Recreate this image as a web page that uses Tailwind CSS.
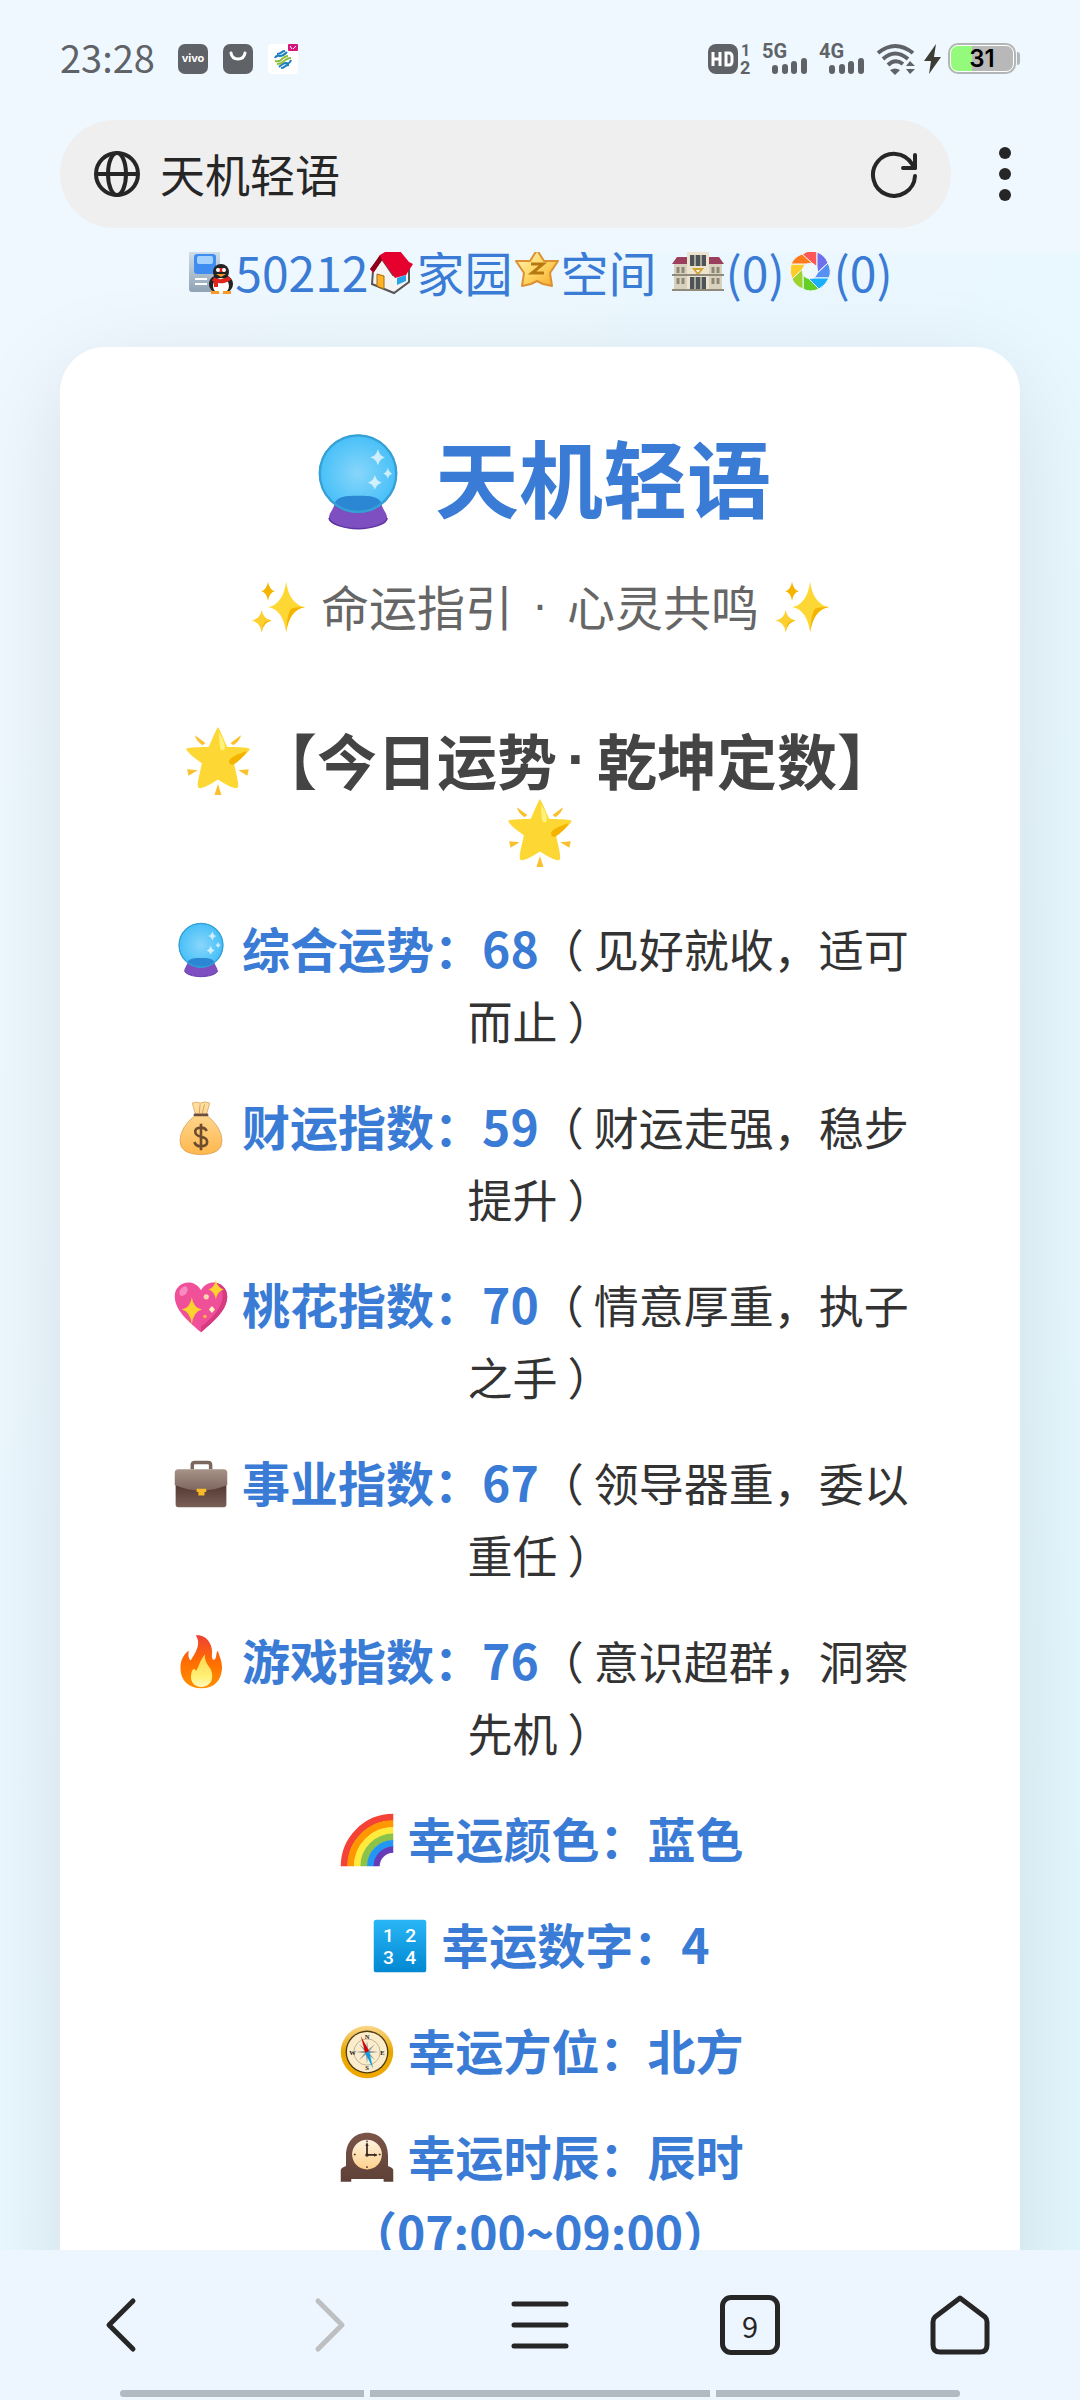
<!DOCTYPE html>
<html lang="zh-CN">
<head>
    <meta charset="UTF-8">
    <meta name="viewport" content="width=device-width, initial-scale=1.0">
    <title>天机轻语</title>
    <script src="https://cdn.jsdelivr.net/npm/@tailwindcss/browser@4"></script>
</head>
<body class="h-screen flex flex-col overflow-hidden bg-[#eff8ff] text-[#333] font-['Noto_Sans_CJK_SC',sans-serif]">

    <!-- Shared icon shapes -->
    <svg class="absolute w-0 h-0">
        <defs>
            <radialGradient id="ballFill"><stop offset="0" stop-color="#81d4fa"/><stop offset="1" stop-color="#3dbcf8"/></radialGradient>
            <linearGradient id="bagFill" x1="0" y1="0" x2="0" y2="1"><stop offset="0" stop-color="#ffe0a3"/><stop offset="1" stop-color="#ffb74d"/></linearGradient>
            <linearGradient id="caseFill" x1="0" y1="0" x2="0" y2="1"><stop offset="0" stop-color="#a89389"/><stop offset="1" stop-color="#7d665d"/></linearGradient>
            <linearGradient id="caseDark" x1="0" y1="0" x2="0" y2="1"><stop offset="0" stop-color="#4e342e"/><stop offset="1" stop-color="#795f56"/></linearGradient>
            <linearGradient id="fireFill" x1="0" y1="0" x2="0" y2="1"><stop offset="0" stop-color="#ef4035"/><stop offset=".5" stop-color="#ff6d00"/><stop offset="1" stop-color="#ff9100"/></linearGradient>
            <linearGradient id="flameFill" x1="0" y1="0" x2="0" y2="1"><stop offset="0" stop-color="#ffd54f"/><stop offset=".7" stop-color="#fff176"/><stop offset="1" stop-color="#fff9c4"/></linearGradient>
            <linearGradient id="numFill" x1="0" y1="0" x2="0" y2="1"><stop offset="0" stop-color="#29b6f6"/><stop offset="1" stop-color="#0288d1"/></linearGradient>
            <linearGradient id="goldFill" x1="0" y1="0" x2="0" y2="1"><stop offset="0" stop-color="#fcd68a"/><stop offset=".5" stop-color="#e8a800"/><stop offset="1" stop-color="#f0a800"/></linearGradient>
            <linearGradient id="faceFill" x1="0" y1="0" x2="0" y2="1"><stop offset="0" stop-color="#fff3e0"/><stop offset="1" stop-color="#ffd08a"/></linearGradient>
            <linearGradient id="woodFill" x1="0" y1="0" x2="0" y2="1"><stop offset="0" stop-color="#7b5548"/><stop offset="1" stop-color="#5d4037"/></linearGradient>
            <linearGradient id="penFill" x1="0" y1="0" x2="0" y2="1"><stop offset="0" stop-color="#d6e2ee"/><stop offset="1" stop-color="#8fa3b5"/></linearGradient>
            <linearGradient id="starFill" x1="0" y1="0" x2="1" y2="1"><stop offset="0" stop-color="#fff6c0"/><stop offset=".5" stop-color="#ffd867"/><stop offset="1" stop-color="#f7a829"/></linearGradient>
        </defs>
        <symbol id="crystal" viewBox="0 0 128 128">
            <path d="M34 88 C34 98 26 104 26 111 C26 119 46 125 64 125 C82 125 102 119 102 111 C102 104 94 98 94 88Z" fill="#7e4fc0"/>
            <path d="M26 111 C28 119 46 125 64 125 C82 125 102 119 102 111" fill="none" stroke="#5e35a1" stroke-width="2"/>
            <circle cx="64" cy="53" r="51" fill="url(#ballFill)" fill-opacity=".95"/>
            <path d="M33 94 C35 82 50 82 64 82 C78 82 93 82 95 94 A51 51 0 0 1 33 94Z" fill="#2b87d3"/>
            <circle cx="64" cy="53" r="50" fill="none" stroke="#35a0d4" stroke-width="3"/>
            <path d="M90 21 Q92 30 99 32 Q92 34 90 42 Q88 34 80 32 Q88 30 90 21Z M103 45 Q104 51 109 53 Q104 55 103 60 Q102 55 97 53 Q102 51 103 45Z M86 55 Q88 63 95 65 Q88 67 86 74 Q84 67 77 65 Q84 63 86 55Z" fill="#fff" fill-opacity=".7"/>
        </symbol>
        <symbol id="sparkles" viewBox="0 0 128 128">
            <path d="M82 8 Q89 58 124 64 Q89 70 82 120 Q75 70 42 64 Q75 58 82 8Z" fill="#fdd835"/>
            <path d="M124 64 Q89 70 82 120 Q84 78 93 68 Q103 63 124 64Z" fill="#f4b400"/>
            <path d="M42 8 Q45 26 57 29 Q45 32 42 50 Q39 32 27 29 Q39 26 42 8Z" fill="#f4b400"/>
            <path d="M28 70 Q31 90 50 94 Q31 98 28 120 Q25 98 6 94 Q25 90 28 70Z" fill="#fdd02f"/>
            <path d="M50 94 Q31 98 28 120 Q29 103 36 97 Q41 94 50 94Z" fill="#f4b400"/>
        </symbol>
        <symbol id="glowStar" viewBox="0 0 128 128">
            <g transform="translate(-18 0) scale(1.28 1)">
                <path d="M64 2 C68 10 72 24 77 38 C90 39 104 39 109 41 C111 45 98 58 87 68 C90 88 95 108 92 113 C88 117 74 106 64 98 C54 106 40 117 36 113 C33 108 38 88 41 68 C30 58 17 45 19 41 C24 39 38 39 51 38 C56 24 60 10 64 2Z" fill="#fdd835"/>
                <path d="M65 12 C70 20 74 32 74 40 C73 46 68 46 67 40Z" fill="#fff27a"/>
                <path d="M105 46 C98 48 82 56 80 63 C79 70 84 73 88 69 C92 65 102 56 105 46Z" fill="#f4b400"/>
                <path d="M31 17 L46 31 L42 35Q33 28 31 17Z M97 17 L82 31 L86 35Q95 28 97 17Z M20 79 L35 81 L22 91Z M108 79 L93 81 L106 91Z M64 106 L69 126 H59Z" fill="#fbc02d"/>
            </g>
        </symbol>
        <symbol id="moneyBag" viewBox="0 0 128 128">
            <path d="M44 7 Q54 3 62 7 Q74 2 84 7 L76 34 Q112 62 112 94 Q112 124 64 125 Q16 124 16 94 Q16 62 52 34Z" fill="url(#bagFill)" stroke="#d9a860" stroke-width="2"/>
            <path d="M62 10 L60 30 M72 10 L67 30" stroke="#c99a5b" stroke-width="2"/>
            <path d="M50 34 H78" stroke="#6d4c41" stroke-width="6" stroke-linecap="round"/>
            <path d="M77 71 Q74 63 64 63 Q50 63 51 74 Q52 81 64 84 Q79 87 78 97 Q77 106 64 106 Q52 106 49 96 M64 54 V115" fill="none" stroke="#6d4c2f" stroke-width="6"/>
        </symbol>
        <symbol id="heart" viewBox="0 0 128 128">
            <path d="M64 124 C42 104 4 76 4 42 C4 8 48 -2 64 28 C80 -2 124 8 124 42 C124 76 86 104 64 124Z" fill="#f0509a"/>
            <path d="M92 10 C126 20 117 62 88 90 Q75 103 64 111 V124 C86 104 124 76 124 42 C124 24 110 11 92 10Z" fill="#d63a80"/>
            <ellipse cx="24" cy="30" rx="8" ry="12" transform="rotate(35 24 30)" fill="#f78bc0"/>
            <path d="M43 44 Q47 69 66 72 Q47 76 43 106 Q39 76 20 72 Q39 69 43 44Z M98 4 Q101 23 116 26 Q101 30 98 49 Q95 30 81 26 Q95 23 98 4Z" fill="#fdd22f"/>
            <circle cx="76" cy="43" r="6" fill="#ffd6b0"/>
            <path d="M89 64 L96 72 L89 80 L82 72Z" fill="#fff2c0"/>
            <circle cx="73" cy="88" r="4" fill="#ffb13d"/>
        </symbol>
        <symbol id="briefcase" viewBox="0 0 128 128">
            <path d="M44 30 V21 Q44 15 50 15 H80 Q86 15 86 21 V30" fill="none" stroke="#7d665d" stroke-width="8"/>
            <rect x="6" y="60" width="116" height="57" rx="6" fill="url(#caseDark)"/>
            <path d="M4 38 Q4 30 12 30 H116 Q124 30 124 38 V66 Q94 79 64 79 Q34 79 4 66Z" fill="url(#caseFill)"/>
            <path d="M54 75 H76 V82 H72 V90 H58 V82 H54Z" fill="#fbb829"/>
        </symbol>
        <symbol id="fire" viewBox="0 0 128 128">
            <path d="M52 3 C76 0 92 24 89 46 C88 58 93 62 97 56 C100 50 98 42 103 38 C104 48 113 60 112 80 C110 108 92 124 66 124 C36 124 17 106 17 78 C17 56 27 44 36 38 C34 48 36 58 41 60 C50 44 66 24 52 3Z" fill="url(#fireFill)"/>
            <path d="M73 46 C72 62 78 68 86 80 C96 104 84 120 66 121 C46 120 38 106 42 90 C44 78 50 78 52 84 C56 84 60 62 73 46Z" fill="url(#flameFill)"/>
        </symbol>
        <symbol id="rainbow" viewBox="0 0 128 128">
            <g fill="none" stroke-width="16">
                <path d="M12 124 A112 112 0 0 1 124 12" stroke="#f44336"/>
                <path d="M27 124 A97 97 0 0 1 124 27" stroke="#ff9800"/>
                <path d="M42 124 A82 82 0 0 1 124 42" stroke="#ffeb3b"/>
                <path d="M57 124 A67 67 0 0 1 124 57" stroke="#8bc34a"/>
                <path d="M72 124 A52 52 0 0 1 124 72" stroke="#2196f3"/>
                <path d="M86 124 A38 38 0 0 1 124 86" stroke="#673ab7" stroke-width="14"/>
            </g>
        </symbol>
        <symbol id="clock" viewBox="0 0 128 128">
            <path d="M16 82 V58 C16 26 36 6 64 6 C92 6 112 26 112 58 V82 Q124 86 124 92 V118 H102 V112 H28 V118 H4 V92 Q4 86 16 82Z" fill="url(#woodFill)"/>
            <circle cx="64" cy="56" r="34" fill="url(#faceFill)"/>
            <path d="M64 31 V57 H86" fill="none" stroke="#3b2a24" stroke-width="4"/>
            <path d="M60 36 L64 29 L68 36Z M80 53 L88 57 L80 61Z" fill="#3b2a24"/>
            <circle cx="64" cy="57" r="4" fill="#3b2a24"/>
            <path d="M64 24 V28 M64 83 V87 M34 56 H38 M91 56 H95" stroke="#3b2a24" stroke-width="3"/>
        </symbol>
    </svg>

    <!-- Status bar -->
    <div class="flex items-center justify-between px-[60px] pt-[37px] h-[80px] shrink-0 text-[#5f6367]">
        <div class="flex items-center gap-[15px]">
            <span class="text-[38px] leading-[40px] mr-2 pb-1">23:28</span>
            <svg class="w-[30px] h-[30px]" viewBox="0 0 30 30">
                <rect width="30" height="30" rx="7" fill="#5f6367"/>
                <text x="15" y="18" text-anchor="middle" font-family="Inter, sans-serif" font-weight="700" font-size="11" fill="#fff">vivo</text>
            </svg>
            <svg class="w-[30px] h-[30px]" viewBox="0 0 30 30">
                <rect width="30" height="30" rx="7" fill="#5f6367"/>
                <path d="M8 9 Q9 15 15 15 Q21 15 22 9" fill="none" stroke="#fff" stroke-width="3" stroke-linecap="round"/>
            </svg>
            <svg class="w-[30px] h-[30px]" viewBox="0 0 30 30">
                <rect width="30" height="30" rx="4" fill="#fff"/>
                <rect x="20" width="10" height="7" rx="1" fill="#d6147b"/>
                <path d="M22 2 L24 5 M25 5 L28 2" stroke="#fff" stroke-width="1"/>
                <g fill="none" stroke="#1d7fc1" stroke-width="2">
                    <path d="M7 14 Q8 11 12 12 Q15 12 19 8 M9 10 Q12 10 14 8 Q15 7 17 7 M23 16 Q22 20 18 19 Q15 19 11 23 M21 21 Q18 21 16 23 Q15 24 13 24"/>
                    <path d="M7 17 Q11 18 13 16 Q17 12 20 12" stroke="#8fbe3c"/>
                    <path d="M9 20 Q13 20 15 18 Q19 14 23 14" stroke="#8fbe3c"/>
                </g>
            </svg>
        </div>
        <div class="flex items-center">
            <svg class="w-[43px] h-[32px] overflow-visible" viewBox="0 0 43 32">
                <rect y="1" width="30" height="30" rx="8" fill="#5f6367"/>
                <path d="M5 9 V23 M12 9 V23 M5 16 H12 M18 10 H21 Q24 10 24 14 V18 Q24 22 21 22 H18Z" fill="none" stroke="#fff" stroke-width="3"/>
                <text x="33" y="13" font-family="Roboto, sans-serif" font-weight="700" font-size="16" fill="#5f6367">1</text>
                <text x="32" y="31" font-family="Roboto, sans-serif" font-weight="700" font-size="18" fill="#5f6367">2</text>
            </svg>
            <svg class="w-[46px] h-[32px] ml-[11px] overflow-visible" viewBox="0 0 46 32">
                <text x="0" y="15" font-family="Roboto, sans-serif" font-weight="700" font-size="20" fill="#5f6367">5G</text>
                <path d="M13 25 V28 M23 24 V28 M32 21 V28 M42 18 V28" stroke="#5f6367" stroke-width="6" stroke-linecap="round"/>
            </svg>
            <svg class="w-[46px] h-[32px] ml-[11px] overflow-visible" viewBox="0 0 46 32">
                <text x="0" y="15" font-family="Roboto, sans-serif" font-weight="700" font-size="20" fill="#5f6367">4G</text>
                <path d="M13 25 V28 M23 24 V28 M32 21 V28 M42 18 V28" stroke="#5f6367" stroke-width="6" stroke-linecap="round"/>
            </svg>
            <svg class="w-[40px] h-[32px] ml-[11px]" viewBox="0 0 40 32">
                <g fill="none" stroke="#5f6367" stroke-width="4">
                    <path d="M2 10 Q19 -4 37 10 M7 16 Q19 5 32 16 M12 22 Q19 15 27 21"/>
                </g>
                <path d="M14 27 Q19 24 24 27 L19 32Z M30 23 L34 18 L39 23Z M30 26 H39 L34 31Z" fill="#5f6367"/>
            </svg>
            <svg class="w-[18px] h-[32px] ml-[8px]" viewBox="0 0 18 32">
                <path d="M12 1 L0 18 H7 L5 31 L17 14 H10Z" fill="#3d3d35"/>
            </svg>
            <div class="flex items-center ml-[6px]">
                <div class="relative flex items-center justify-center w-[68px] h-[31px] rounded-[10px] border-2 border-[#b3b6b6] bg-linear-to-r from-[#94fa7b] from-35% to-[#b8b8b8] to-35% text-black">
                    <div class="absolute inset-0 rounded-lg border border-white"></div>
                    <span class="font-['Inter',sans-serif] font-semibold text-[24px] leading-[27px]">31</span>
                </div>
                <div class="w-[3px] h-[13px] ml-px rounded-r bg-[#b3b6b6]"></div>
            </div>
        </div>
    </div>

    <!-- Address bar -->
    <div class="flex items-center pl-[60px] pr-[69px] pt-[40px] pb-[24px] shrink-0">
        <div class="flex flex-1 items-center h-[108px] rounded-full bg-[#efefef] px-[33px]">
            <svg class="w-[48px] h-[48px]" viewBox="0 0 48 48" fill="none" stroke="#262626" stroke-width="4">
                <circle cx="24" cy="24" r="21"/>
                <ellipse cx="24" cy="24" rx="9" ry="21"/>
                <path d="M3 24 H45"/>
            </svg>
            <input type="text" aria-label="地址栏" value="天机轻语" class="flex-1 min-w-0 ml-[19px] pb-px bg-transparent text-[45px] leading-[64px] text-[#262626] outline-none">
            <button aria-label="刷新">
                <svg class="block w-[48px] h-[48px]" viewBox="0 0 48 48" fill="none" stroke="#262626" stroke-width="4" stroke-linecap="round" stroke-linejoin="round">
                    <path d="M45 26 A21 21 0 1 1 42 14 L45 18"/>
                    <path d="M45 5 V18 H33"/>
                </svg>
            </button>
        </div>
        <button aria-label="更多" class="flex flex-col items-center gap-[9px] ml-[48px]">
            <span class="w-[12px] h-[12px] rounded-full bg-[#262626]"></span>
            <span class="w-[12px] h-[12px] rounded-full bg-[#262626]"></span>
            <span class="w-[12px] h-[12px] rounded-full bg-[#262626]"></span>
        </button>
    </div>

    <!-- Page content -->
    <main class="flex-1 min-h-0 overflow-hidden bg-linear-to-br from-[#f0f8ff] to-[#e2f6fd] px-[60px]">
        <nav class="-mt-[17px] flex items-center justify-center text-[48px] leading-[72px] text-[#3a7bd5]">
            <a href="#" class="flex items-center">
                <svg class="w-[48px] h-[48px]" viewBox="0 0 48 48">
                    <rect x="2" y="1" width="31" height="44" rx="3" fill="url(#penFill)"/>
                    <rect x="7" y="7" width="22" height="20" rx="3" fill="#3f8df0"/>
                    <rect x="10" y="9" width="16" height="8" rx="2" fill="#a5d2ff"/>
                    <path d="M8 32 H20 M8 37 H20" stroke="#fff" stroke-width="2"/>
                    <ellipse cx="34" cy="37" rx="12" ry="10" fill="#222"/>
                    <circle cx="34" cy="25" r="8" fill="#222"/>
                    <ellipse cx="34" cy="39" rx="8" ry="8" fill="#fff"/>
                    <path d="M30 23 H38 M26 32 Q34 37 43 31 M29 33 V40" fill="none" stroke="#e1251b" stroke-width="4"/>
                    <path d="M29 27 H39 L34 30Z M24 44 H32 V47 H24Z M36 44 H44 V47 H36Z" fill="#f79a28"/>
                    <circle cx="31" cy="23" r="2" fill="#fff"/><circle cx="37" cy="23" r="2" fill="#fff"/>
                </svg>50212
            </a>
            <a href="#" class="flex items-center">
                <svg class="w-[48px] h-[48px]" viewBox="0 0 48 48">
                    <path d="M5 24 L14 12 L25 28 L41 22 V35 L26 46 L4 37Z" fill="#f4f4f4" stroke="#555" stroke-width="2"/>
                    <path d="M12 8 L5 20 L2 22 L5 26 L14 13 L27 31 L38 28 L45 17 L41 15 L32 4 L17 5Z" fill="#e6002e"/>
                    <path d="M12 8 L14 13 L6 25 L2 22Z" fill="#8e0018"/>
                    <path d="M9 27 L16 29 V42 L9 39Z" fill="#ffb327" stroke="#a76a10" stroke-width="1"/>
                    <path d="M29 31 L38 28 V34 L29 38Z" fill="#2aa4e8"/>
                </svg>家园
            </a>
            <a href="#" class="flex items-center">
                <svg class="w-[48px] h-[48px]" viewBox="0 0 48 48">
                    <path d="M24 3 L31 14 H45 L37 26 L39 39 L30 37 L24 34 L18 37 L9 39 L11 26 L3 14 H17Z" fill="url(#starFill)" stroke="#dd9132" stroke-width="2" stroke-linejoin="round"/>
                    <path d="M18 17 H30 L19 26 H31" fill="none" stroke="#b87812" stroke-width="3"/>
                </svg>空间
            </a>
            <a href="#" class="flex items-center ml-[13px]">
                <svg class="w-[56px] h-[48px]" viewBox="0 0 56 48">
                    <path d="M4 15 H52 V43 H4Z" fill="#d8d1bd"/>
                    <path d="M2 17 L7 10 H18 V17Z M38 10 H49 L54 17 H38Z" fill="#9c3f5c"/>
                    <rect x="17" y="4" width="22" height="39" fill="#ece4cf"/>
                    <path d="M20 8 H36 V19 H20Z M20 30 H36 V43 H20Z" fill="#4d5358"/>
                    <path d="M25 8 V19 M31 8 V19 M25 30 V43 M31 30 V43" stroke="#aaa896" stroke-width="2"/>
                    <path d="M24 22 H32 L28 27Z" fill="#fff" stroke="#d3a332" stroke-width="2"/>
                    <path d="M8 20 V26 M13 20 V26 M43 20 V26 M48 20 V26 M8 31 V37 M13 31 V37 M43 31 V37 M48 31 V37" stroke="#8d8776" stroke-width="3"/>
                    <path d="M2 28 H54 M2 43 H54" stroke="#908a7a" stroke-width="2"/>
                </svg>(0)
            </a>
            <a href="#" class="flex items-center ml-px">
                <svg class="w-[48px] h-[48px]" viewBox="0 0 48 48">
                    <g stroke="#eff8ff" stroke-width="1">
                        <path d="M24 4 A20 20 0 0 1 31 5 V20 L16 8 Q20 4 24 4Z" fill="#ff5757"/>
                        <path d="M31 5 Q39 8 42 16 L31 26 V5Z" fill="#6f6fee"/>
                        <path d="M42 16 Q46 24 43 31 H26 L42 16Z" fill="#5590f2"/>
                        <path d="M43 31 Q40 38 33 42 L22 31Z" fill="#19b0f8"/>
                        <path d="M33 42 Q24 46 17 42 V26Z" fill="#62d026"/>
                        <path d="M17 42 Q9 39 6 32 L17 21Z" fill="#9ed32b"/>
                        <path d="M6 32 Q3 25 5 17 H22Z" fill="#ffcb27"/>
                        <path d="M5 17 Q8 10 16 7 L27 17Z" fill="#ff7a1a"/>
                    </g>
                    <circle cx="24" cy="24" r="8" fill="#eff8ff"/>
                </svg>(0)
            </a>
        </nav>

        <section class="mt-[40px] min-h-full rounded-[45px] bg-white px-[90px] pt-[70px] pb-[90px] text-center shadow-[0_24px_96px_rgba(0,0,0,0.1)]">
            <h1 class="flex items-center justify-center gap-[28px] text-[84px] leading-[118px] font-bold text-[#3a7bd5]">
                <svg class="w-[98px] h-[98px] mt-3"><use href="#crystal"/></svg>
                天机轻语
            </h1>
            <p class="mt-[34px] flex items-center justify-center gap-[14px] text-[48px] leading-[72px] text-[#666]">
                <svg class="w-[58px] h-[58px] mt-1"><use href="#sparkles"/></svg>
                <span>命运指引</span><span class="px-[5px] font-['Liberation_Sans',sans-serif]">·</span><span>心灵共鸣</span>
                <svg class="w-[58px] h-[58px] mt-1"><use href="#sparkles"/></svg>
            </p>

            <h2 class="mt-[81px] mb-[41px] flex flex-col items-center text-[60px] leading-[72px] font-bold text-[#444]">
                <span class="flex items-center">
                    <svg class="w-[70px] h-[70px] mr-1 mt-1"><use href="#glowStar"/></svg>
                    <span>【今日运势</span><span class="px-[10px] font-['Liberation_Sans',sans-serif]">·</span><span>乾坤定数】</span>
                </span>
                <svg class="w-[70px] h-[70px] mt-[2px]"><use href="#glowStar"/></svg>
            </h2>

            <div class="space-y-[30px] text-[45px] leading-[72px]">
                <p><strong class="text-[48px] leading-[76px] text-[#3a7bd5]"><svg class="inline-block w-[56px] h-[56px] mx-[2px] align-[-10px]"><use href="#crystal"/></svg> 综合运势：68</strong>（ 见好就收，适可而止 ）</p>
                <p><strong class="text-[48px] leading-[76px] text-[#3a7bd5]"><svg class="inline-block w-[56px] h-[56px] mx-[2px] align-[-10px]"><use href="#moneyBag"/></svg> 财运指数：59</strong>（ 财运走强，稳步提升 ）</p>
                <p><strong class="text-[48px] leading-[76px] text-[#3a7bd5]"><svg class="inline-block w-[56px] h-[56px] mx-[2px] align-[-10px]"><use href="#heart"/></svg> 桃花指数：70</strong>（ 情意厚重，执子之手 ）</p>
                <p><strong class="text-[48px] leading-[76px] text-[#3a7bd5]"><svg class="inline-block w-[56px] h-[56px] mx-[2px] align-[-10px]"><use href="#briefcase"/></svg> 事业指数：67</strong>（ 领导器重，委以重任 ）</p>
                <p><strong class="text-[48px] leading-[76px] text-[#3a7bd5]"><svg class="inline-block w-[56px] h-[56px] mx-[2px] align-[-10px]"><use href="#fire"/></svg> 游戏指数：76</strong>（ 意识超群，洞察先机 ）</p>
                <p><strong class="text-[48px] leading-[76px] text-[#3a7bd5]"><svg class="inline-block w-[56px] h-[56px] mx-[2px] align-[-10px]"><use href="#rainbow"/></svg> 幸运颜色：蓝色</strong></p>
                <p><strong class="text-[48px] leading-[76px] text-[#3a7bd5]"><svg class="inline-block w-[56px] h-[56px] mx-[2px] align-[-10px]" viewBox="0 0 128 128">
                    <rect x="4" y="4" width="120" height="120" rx="6" fill="url(#numFill)"/>
                    <g fill="#fff" font-family="Roboto, sans-serif" font-weight="500" font-size="44">
                        <text x="25" y="55">1</text><text x="76" y="55">2</text>
                        <text x="25" y="106">3</text><text x="76" y="106">4</text>
                    </g>
                </svg> 幸运数字：4</strong></p>
                <p><strong class="text-[48px] leading-[76px] text-[#3a7bd5]"><svg class="inline-block w-[56px] h-[56px] mx-[2px] align-[-10px]" viewBox="0 0 128 128">
                    <circle cx="64" cy="64" r="60" fill="url(#goldFill)"/>
                    <circle cx="64" cy="64" r="49" fill="#4e3b12"/>
                    <circle cx="64" cy="64" r="46" fill="#fbeccb"/>
                    <circle cx="64" cy="64" r="30" fill="none" stroke="#b9ad90" stroke-width="2"/>
                    <path d="M64 38 L67 61 L90 64 L67 67 L64 90 L61 67 L38 64 L61 61Z M46 46 L66 62 L82 82 L62 66Z M82 46 L66 66 L46 82 L62 62Z" fill="#8a9aa0"/>
                    <path d="M50 28 L69 62 L60 66Z" fill="#d50000"/>
                    <path d="M78 102 L60 66 L69 62Z" fill="#0d9be0"/>
                    <g fill="#222" font-family="Liberation Serif, serif" font-weight="700" font-size="15" text-anchor="middle">
                        <text x="64" y="34">N</text><text x="64" y="105">S</text><text x="31" y="70">W</text><text x="99" y="70">E</text>
                    </g>
                </svg> 幸运方位：北方</strong></p>
                <p><strong class="text-[48px] leading-[76px] text-[#3a7bd5]"><svg class="inline-block w-[56px] h-[56px] mx-[2px] align-[-10px]"><use href="#clock"/></svg> 幸运时辰：辰时<br>（07:00~09:00）</strong></p>
            </div>
        </section>
    </main>

    <!-- Browser toolbar -->
    <footer class="relative z-10 shrink-0 bg-[#edf5ff] px-[15px] pt-[45px]">
        <div class="flex justify-between">
            <button aria-label="后退" class="flex justify-center w-[210px]">
                <svg class="w-[60px] h-[60px]" viewBox="0 0 60 60" fill="none" stroke="#262626" stroke-width="5" stroke-linecap="round" stroke-linejoin="round"><path d="M43 6 L19 30 L43 54"/></svg>
            </button>
            <button aria-label="前进" class="flex justify-center w-[210px]" disabled>
                <svg class="w-[60px] h-[60px]" viewBox="0 0 60 60" fill="none" stroke="#bdbfc1" stroke-width="5" stroke-linecap="round" stroke-linejoin="round"><path d="M18 6 L42 30 L18 54"/></svg>
            </button>
            <button aria-label="菜单" class="flex justify-center w-[210px]">
                <svg class="w-[60px] h-[60px]" viewBox="0 0 60 60" stroke="#262626" stroke-width="5" stroke-linecap="round"><path d="M4 9 H56 M4 30 H56 M4 51 H56"/></svg>
            </button>
            <button aria-label="标签页" class="flex justify-center w-[210px]">
                <span class="flex items-center justify-center w-[60px] h-[60px] rounded-[11px] border-5 border-[#262626] text-[29px] leading-[40px] text-[#262626]">9</span>
            </button>
            <button aria-label="主页" class="flex justify-center w-[210px]">
                <svg class="w-[60px] h-[60px]" viewBox="0 0 60 60" fill="none" stroke="#262626" stroke-width="5" stroke-linejoin="round"><path d="M30 3 L55 22 Q57 24 57 27 V50 Q57 57 50 57 H10 Q3 57 3 50 V27 Q3 24 5 22Z"/></svg>
            </button>
        </div>
        <!-- Gesture handle -->
        <div class="mt-[35px] mb-[3px] flex gap-[6px] px-[105px]">
            <div class="flex-5 h-[7px] rounded-l-full bg-[#b1b9c1]"></div>
            <div class="flex-7 h-[7px] bg-[#b1b9c1]"></div>
            <div class="flex-5 h-[7px] rounded-r-full bg-[#b1b9c1]"></div>
        </div>
    </footer>

</body>
</html>
